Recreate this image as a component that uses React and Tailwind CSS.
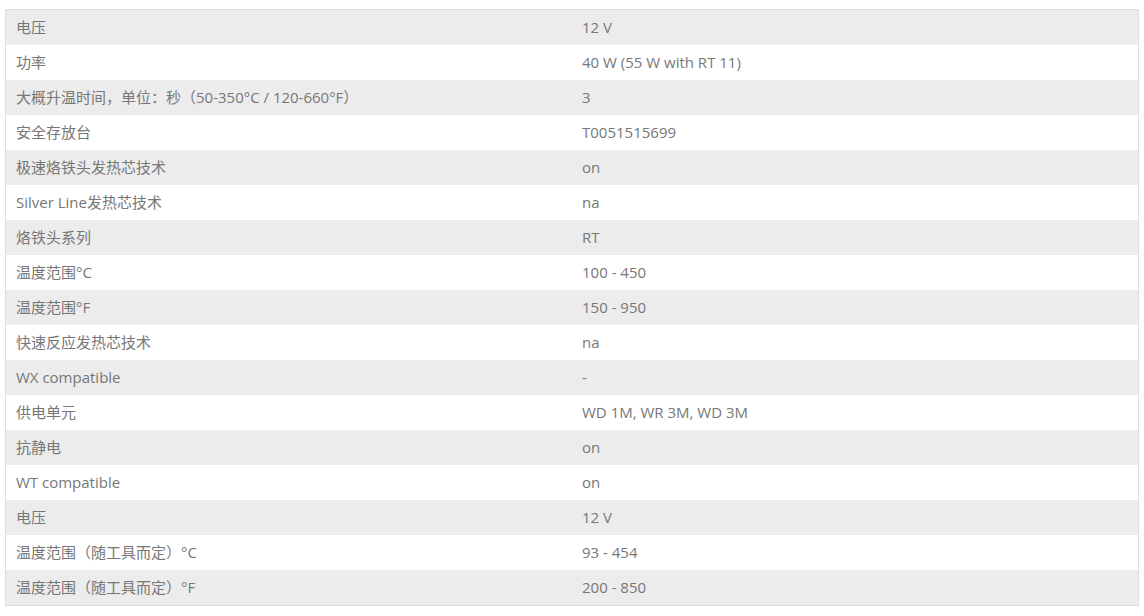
import React from "react";

const rows = [
  ["电压", "12 V"],
  ["功率", "40 W (55 W with RT 11)"],
  ["大概升温时间，单位：秒（50-350°C / 120-660°F）", "3"],
  ["安全存放台", "T0051515699"],
  ["极速烙铁头发热芯技术", "on"],
  ["Silver Line发热芯技术", "na"],
  ["烙铁头系列", "RT"],
  ["温度范围°C", "100 - 450"],
  ["温度范围°F", "150 - 950"],
  ["快速反应发热芯技术", "na"],
  ["WX compatible", "-"],
  ["供电单元", "WD 1M, WR 3M, WD 3M"],
  ["抗静电", "on"],
  ["WT compatible", "on"],
  ["电压", "12 V"],
  ["温度范围（随工具而定）°C", "93 - 454"],
  ["温度范围（随工具而定）°F", "200 - 850"],
];

export default function App() {
  return (
    <div className="w-[1144px] h-[616px] bg-white pt-[9px] pl-[5px]">
      <div
        className="w-[1134px] border border-[#dddddd] text-[15px] text-[#777777]"
        style={{ fontFamily: '"Open Sans", "Noto Sans CJK SC", sans-serif' }}
      >
        {rows.map(([k, v], i) => (
          <div
            key={i}
            className={`grid grid-cols-2 h-[35px] pb-[2px] items-center ${i % 2 === 0 ? "bg-[#ececec]" : "bg-white"}`}
          >
            <div className="px-[10px] leading-[20px] whitespace-nowrap">{k}</div>
            <div className="px-[10px] leading-[20px] whitespace-nowrap">{v}</div>
          </div>
        ))}
      </div>
    </div>
  );
}
